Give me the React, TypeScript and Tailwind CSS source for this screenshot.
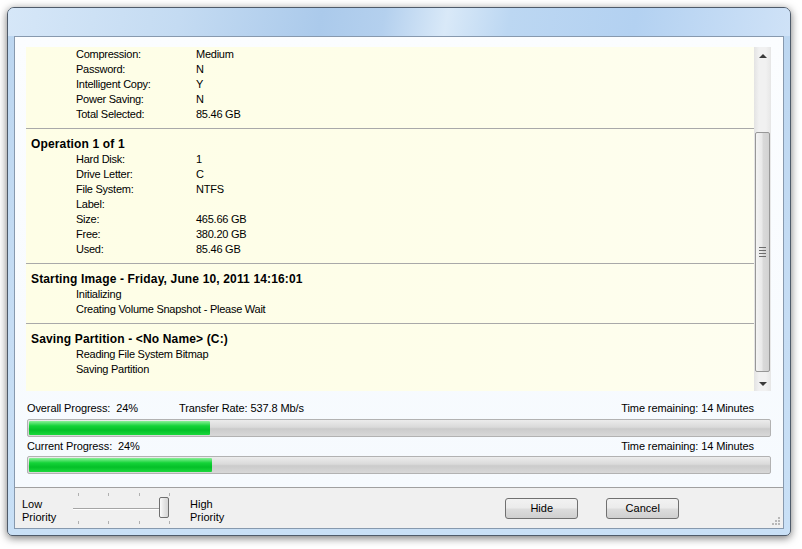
const summary = [
  ["Compression:", "Medium"],
  ["Password:", "N"],
  ["Intelligent Copy:", "Y"],
  ["Power Saving:", "N"],
  ["Total Selected:", "85.46 GB"],
];

const sections = [
  {
    title: "Operation 1 of 1",
    rows: [
      ["Hard Disk:", "1"],
      ["Drive Letter:", "C"],
      ["File System:", "NTFS"],
      ["Label:", ""],
      ["Size:", "465.66 GB"],
      ["Free:", "380.20 GB"],
      ["Used:", "85.46 GB"],
    ],
  },
  {
    title: "Starting Image - Friday, June 10, 2011 14:16:01",
    rows: [["Initializing", ""], ["Creating Volume Snapshot - Please Wait", ""]],
  },
  {
    title: "Saving Partition - <No Name> (C:)",
    rows: [["Reading File System Bitmap", ""], ["Saving Partition", ""]],
  },
];

function Row({ label, value }: { label: string; value: string }) {
  return (
    <div className="flex h-[15px] items-center pl-[50px] text-[11px] tracking-[-0.25px] leading-[15px]">
      <span className="w-[120px] shrink-0 whitespace-nowrap">{label}</span>
      <span className="whitespace-nowrap">{value}</span>
    </div>
  );
}

function Bar({ pct }: { pct: number }) {
  return (
    <div className="h-[18px] w-[744px] ml-[1px] rounded-[2px] border border-[#b2b2b2] bg-[linear-gradient(#ececec,#dadada_45%,#cbcbcb_55%,#d8d8d8)] p-[1px] flex">
      <div
        className="h-full rounded-[1px] bg-[linear-gradient(#8af098,#14d338_35%,#04c028_65%,#1ad83c)]"
        style={{ width: `${pct}%` }}
      />
    </div>
  );
}

function Tick() {
  return <div className="w-[1px] h-[3px] bg-[#b0b0b0]" />;
}

export default function App() {
  return (
    <div
      className="w-[802px] h-[549px] bg-white pt-[7px] pl-[7px] overflow-hidden"
      style={{ fontFamily: '"Liberation Sans", Arial, sans-serif' }}
    >
      <div className="w-[784px] h-[529px] rounded-t-[7px] rounded-b-[5px] border border-[#4f5b6a] bg-[linear-gradient(#bcd6f0,#c6ddf4_60%,#c9e0f6)] shadow-[0_2px_9px_rgba(0,0,0,0.55)] flex flex-col overflow-hidden">
        {/* title glass */}
        <div className="h-[28px] shrink-0 bg-[linear-gradient(100deg,#d6e7f8_0%,#c4dbf2_22%,#abcaeb_40%,#b4d0ee_48%,#d9e9f8_56%,#bcd7f2_64%,#b3d1f1_80%,#cfe2f7_100%)]" />
        <div className="flex-1 px-[6px] pb-[6px] flex">
          <div className="w-[770px] h-[493px] border border-[#8799ae] flex flex-col text-black">
            <div className="h-[450px] bg-[linear-gradient(#fbfdff,#f6fafe)] pt-[10px] pl-[11px] flex flex-col">
              {/* log panel */}
              <div className="flex h-[344px] w-[745px]">
                <div className="w-[728px] bg-[linear-gradient(90deg,#fefee6,#fefeea_60%,#fefef0)] overflow-hidden">
                  <div className="pb-[6px] border-b border-[#a9a9a9]">
                    {summary.map(([l, v]) => (
                      <Row key={l} label={l} value={v} />
                    ))}
                  </div>
                  {sections.map((s) => (
                    <div key={s.title} className="pt-[8px] pb-[6px] border-b border-[#a9a9a9] last:border-b-0">
                      <div className="h-[15px] pl-[5px] text-[12px] font-bold tracking-[0.15px] leading-[15px] whitespace-nowrap">
                        {s.title}
                      </div>
                      {s.rows.map(([l, v]) => (
                        <Row key={l} label={l} value={v} />
                      ))}
                    </div>
                  ))}
                </div>
                {/* scrollbar */}
                <div className="w-[17px] bg-[linear-gradient(90deg,#e3e3e3,#f1f1f1_30%,#f1f1f1_70%,#e6e6e6)] flex flex-col items-center">
                  <div className="h-[17px] w-full flex items-center justify-center">
                    <div className="w-0 h-0 border-l-[4px] border-r-[4px] border-b-[4px] border-l-transparent border-r-transparent border-b-[#3a3a3a]" />
                  </div>
                  <div className="h-[68px]" />
                  <div className="w-[15px] h-[240px] rounded-[2px] border border-[#979797] bg-[linear-gradient(90deg,#f4f4f4,#e9e9e9_45%,#d9d9d9_55%,#d2d2d2)] flex flex-col items-center justify-center gap-[2px]">
                    <div className="w-[7px] h-[1px] bg-[#6d6d6d]" />
                    <div className="w-[7px] h-[1px] bg-[#6d6d6d]" />
                    <div className="w-[7px] h-[1px] bg-[#6d6d6d]" />
                    <div className="w-[7px] h-[1px] bg-[#6d6d6d]" />
                  </div>
                  <div className="flex-1 w-full flex items-end justify-center pb-[5px]">
                    <div className="w-0 h-0 border-l-[4px] border-r-[4px] border-t-[4px] border-l-transparent border-r-transparent border-t-[#3a3a3a]" />
                  </div>
                </div>
              </div>
              {/* progress */}
              <div className="w-[745px] pt-[10px] text-[11px] tracking-[-0.1px]">
                <div className="flex h-[15px] items-center leading-[15px] pl-[1px] pr-[17px] whitespace-pre">
                  <span className="w-[152px]">Overall Progress:  24%</span>
                  <span>Transfer Rate: 537.8 Mb/s</span>
                  <span className="ml-auto">Time remaining: 14 Minutes</span>
                </div>
                <div className="mt-[3px]">
                  <Bar pct={24.5} />
                </div>
                <div className="flex h-[15px] items-center leading-[15px] pl-[1px] pr-[17px] mt-[2px] whitespace-pre">
                  <span>Current Progress:  24%</span>
                  <span className="ml-auto">Time remaining: 14 Minutes</span>
                </div>
                <div className="mt-[2px]">
                  <Bar pct={24.7} />
                </div>
              </div>
            </div>
            {/* bottom bar */}
            <div className="flex-1 border-t border-[#a0a0a0] bg-[#f0f0f0] flex items-center relative text-[11px] leading-[13px]">
              <div className="ml-[7px] w-[51px] pt-[6px]">
                <div>Low</div>
                <div>Priority</div>
              </div>
              <div className="w-[117px] h-[32px] pt-[1px] flex flex-col justify-between">
                <div className="flex justify-between w-[92px] ml-[5px]">
                  <Tick />
                  <Tick />
                  <Tick />
                  <Tick />
                </div>
                <div className="relative h-[20px]">
                  <div className="absolute left-0 top-[9px] w-[90px] h-[2px] border-t border-[#a5a5a5] bg-white" />
                  <div className="absolute left-[86px] top-[-2px] w-[10px] h-[21px] rounded-[2px] border border-[#6f6f6f] bg-[linear-gradient(90deg,#fbfbfb,#e5e5e5_50%,#d5d5d5)]" />
                </div>
                <div className="flex justify-between w-[92px] ml-[5px]">
                  <Tick />
                  <Tick />
                  <Tick />
                  <Tick />
                </div>
              </div>
              <div className="pt-[6px]">
                <div>High</div>
                <div>Priority</div>
              </div>
              <div className="ml-[281px] flex gap-[28px]">
                <button className="w-[73px] h-[21px] rounded-[3px] border border-[#707070] bg-[linear-gradient(#f2f2f2,#ebebeb_48%,#dddddd_52%,#cfcfcf)] text-[11px]">
                  Hide
                </button>
                <button className="w-[73px] h-[21px] rounded-[3px] border border-[#707070] bg-[linear-gradient(#f2f2f2,#ebebeb_48%,#dddddd_52%,#cfcfcf)] text-[11px]">
                  Cancel
                </button>
              </div>
              <div className="absolute right-[3px] bottom-[3px] grid grid-cols-3 gap-[1px]">
                <div className="w-[2px] h-[2px]" />
                <div className="w-[2px] h-[2px]" />
                <div className="w-[2px] h-[2px] bg-[#b8b8b8]" />
                <div className="w-[2px] h-[2px]" />
                <div className="w-[2px] h-[2px] bg-[#b8b8b8]" />
                <div className="w-[2px] h-[2px] bg-[#b8b8b8]" />
                <div className="w-[2px] h-[2px] bg-[#b8b8b8]" />
                <div className="w-[2px] h-[2px] bg-[#b8b8b8]" />
                <div className="w-[2px] h-[2px] bg-[#b8b8b8]" />
              </div>
            </div>
          </div>
        </div>
      </div>
    </div>
  );
}
